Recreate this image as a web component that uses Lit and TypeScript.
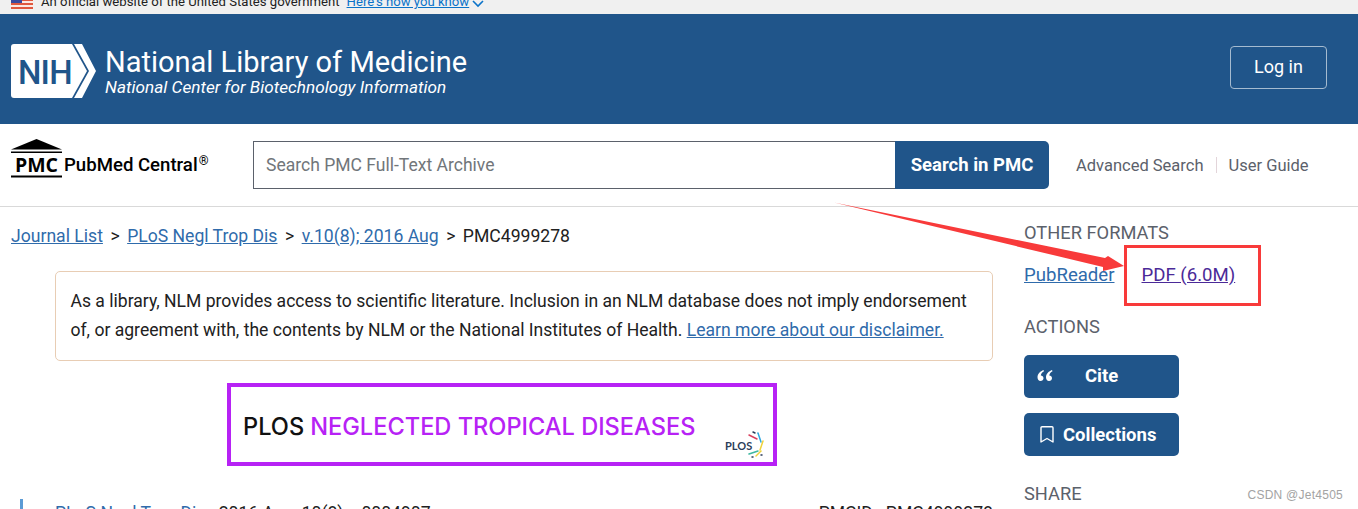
import { LitElement, html, css, svg } from "lit";
import { customElement } from "lit/decorators.js";

const flag = svg`<svg class="flag" viewBox="0 0 22 14" width="22" height="14">
  <rect width="22" height="14" fill="#fbe9e4"/>
  <rect y="0" width="22" height="2" fill="#e0583f"/><rect y="4" width="22" height="2" fill="#e0583f"/>
  <rect y="8" width="22" height="2" fill="#e0583f"/><rect y="12" width="22" height="2" fill="#e0583f"/>
  <rect width="11" height="8" fill="#3a4a9f"/>
</svg>`;

const nih = svg`<svg class="nih" viewBox="0 0 86 54" width="86" height="54">
  <path d="M3 0H61L76 27 61 54H3A3 3 0 0 1 0 51V3A3 3 0 0 1 3 0Z" fill="#fff"/>
  <path d="M63 0H71L85 27 71 54H63L78 27Z" fill="#fff"/>
  <text x="7" y="39.500" class="nih-t">NIH</text>
</svg>`;

const pmc = svg`<svg class="pmc" viewBox="0 0 52 40" width="52" height="40">
  <path d="M25.500 0 51 10.500H0Z" fill="#000"/>
  <rect x="0" y="12.500" width="51" height="1.500" fill="#000"/>
  <rect x="0" y="36.500" width="51" height="2" fill="#000"/>
  <text x="25.500" y="33" text-anchor="middle" class="pmc-t">PMC</text>
</svg>`;

const bookmark = svg`<svg viewBox="0 0 14 17" width="14" height="17" fill="none" stroke="#fff" stroke-width="1.400">
  <path d="M1 1.700A1 1 0 0 1 2 .7H12A1 1 0 0 1 13 1.700V16L7 12.500 1 16Z" stroke-linejoin="round"/>
</svg>`;

const quote = svg`<svg viewBox="0 0 16 11" width="16" height="11" fill="#fff">
  <path d="M6.500 0C3.500 1.300 .5 3.500 .5 7.200 .5 9.500 1.800 11 3.500 11 5.200 11 6.500 9.800 6.500 8.200 6.500 6.500 5.200 5.500 3.800 5.500 4 3.800 5.200 2.300 7 1.300Z"/>
  <path d="M15 0C12 1.300 9 3.500 9 7.200 9 9.500 10.300 11 12 11 13.700 11 15 9.800 15 8.200 15 6.500 13.700 5.500 12.300 5.500 12.500 3.800 13.700 2.300 15.500 1.300Z"/>
</svg>`;

const plosMark = svg`<svg class="plos-mark" viewBox="0 0 42 30" width="42" height="30">
  <g fill="none" stroke-width="1.500" stroke-linecap="round">
    <path d="M24 6 32 10" stroke="#d9415f"/><path d="M33 4 36 13" stroke="#2fa8e0"/>
    <path d="M38 12 35 21" stroke="#f0d33a"/><path d="M24 25 33 22" stroke="#3fb8a0"/>
    <path d="M31 27 36 22" stroke="#f0d33a"/><path d="M28 3 30 4" stroke="#2c3e5a"/>
    <path d="M27 28 28 28" stroke="#2c3e5a"/><path d="M36 26 37 26" stroke="#2c3e5a"/>
  </g>
  <text x="0" y="21" class="plos-t">PLOS</text>
</svg>`;

@customElement("app-root")
export class AppRoot extends LitElement {
  static styles = css`
    :host {
      display: block;
      position: relative;
      width: 1358px;
      height: 509px;
      overflow: hidden;
      background: #fff;
      font-family: Roboto, "Liberation Sans", sans-serif;
      color: #212121;
    }
    a { text-decoration: underline; color: #2f6bab; }

    .gov {
      height: 14px;
      background: #f0f0f0;
      overflow: hidden;
      display: flex;
      align-items: flex-end;
      padding: 0 0 5px 11px;
      box-sizing: border-box;
      gap: 8px;
      font-size: 13.150px;
      line-height: 15px;
      white-space: nowrap;
    }
    .gov .flag { flex: none; }
    .gov a { color: #0b73c9; margin-left: -1px; }
    .gov .chev { margin-left: -5px; margin-bottom: 1px; }

    .masthead {
      height: 110px;
      background: #20558a;
      display: flex;
      align-items: center;
      justify-content: space-between;
      padding: 0 31px 0 11px;
      box-sizing: border-box;
      color: #fff;
    }
    .brand { display: flex; align-items: center; gap: 8px; margin-top: 4px; }
    .nih-t { font: 500 33px Roboto, sans-serif; fill: #20558a; letter-spacing: -0.800px; }
    .brand-text { display: flex; flex-direction: column; }
    .brand-title { font-size: 29px; line-height: 32px; font-weight: 400; margin: 1px 0 -1px; }
    .brand-sub { font-size: 17.200px; line-height: 20px; font-style: italic; }
    .login {
      width: 97px;
      height: 43px;
      box-sizing: border-box;
      border: 1px solid #a5bbd0;
      border-radius: 4px;
      display: flex;
      align-items: center;
      justify-content: center;
      font-size: 18px;
      margin-bottom: 4px;
      padding-bottom: 2px;
    }

    .searchbar {
      height: 83px;
      box-sizing: border-box;
      border-bottom: 1px solid #d9d9d9;
      display: flex;
      align-items: center;
      padding: 0 0 0 11px;
    }
    .pmc-logo { display: flex; align-items: flex-end; width: 242px; flex: none; color: #000; margin-bottom: 12px; }
    .pmc-t { font: 700 19.500px "Open Sans", sans-serif; fill: #000; }
    .pmc-name { font-size: 18.600px; font-weight: 500; margin-left: 1px; line-height: 22px; margin-bottom: 3px; white-space: nowrap; }
    .pmc-name sup { font-size: 12.500px; font-weight: 400; line-height: 0; vertical-align: 6px; margin-left: 1px; }
    .search-box {
      display: flex;
      width: 796px;
      height: 48px;
      flex: none;
    }
    .search-input {
      flex: 1;
      box-sizing: border-box;
      border: 1px solid #5b616b;
      border-right: none;
      display: flex;
      align-items: center;
      padding-left: 12px;
      font-size: 17.550px;
      color: #71767a;
    }
    .search-btn {
      width: 154px;
      background: #20558a;
      color: #fff;
      font-weight: 700;
      font-size: 18.500px;
      border-radius: 0 5px 5px 0;
      display: flex;
      align-items: center;
      justify-content: center;
    }
    .search-links {
      display: flex;
      align-items: center;
      margin-left: 27px;
      font-size: 16.500px;
      color: #5b616b;
      white-space: nowrap;
    }
    .search-links .sep { width: 1px; height: 16px; background: #e3d5da; margin: 0 12px; }

    .main { display: grid; grid-template-columns: 1024px 1fr; }
    .left { padding-left: 11px; }
    .crumbs {
      margin-top: 18px;
      font-size: 17.600px;
      line-height: 22px;
      display: flex;
      gap: 7.500px;
      white-space: nowrap;
    }
    .disclaimer {
      box-sizing: border-box;
      width: 938px;
      height: 90px;
      margin: 24px 0 0 44px;
      border: 1px solid #e8cdb4;
      border-radius: 5px;
      padding: 15px 14.500px;
      font-size: 17.560px;
      line-height: 29px;
    }
    .banner-wrap { display: flex; justify-content: center; width: 982px; margin-top: 22px; }
    .banner {
      box-sizing: border-box;
      position: relative;
      width: 550px;
      height: 83px;
      border: 4px solid #b722f5;
      display: flex;
      align-items: center;
      padding: 4px 0 0 12px;
      font-family: Inter, sans-serif;
      font-size: 23.600px;
      font-weight: 500;
      color: #b722f5;
      white-space: nowrap;
      background: #fff;
    }
    .banner b { color: #111; font-weight: 500; margin-right: 6px; }
    .plos-mark { position: absolute; right: 6px; bottom: 3px; }
    .plos-t { font: 700 11px Lato, sans-serif; fill: #2c3e5a; }
    .cite-row {
      margin: 33px 0 0 9px;
      width: 973px;
      box-sizing: border-box;
      padding: 2px 0 0 32px;
      border-left: 3px solid #5b9bd5;
      display: flex;
      justify-content: space-between;
      font-size: 17.600px;
      line-height: 24px;
      white-space: nowrap;
    }
    .cite-row a { text-decoration: none; }

    .side { padding-top: 15px; }
    .side h2 {
      margin: 0;
      font-size: 18.300px;
      line-height: 22px;
      font-weight: 400;
      color: #5b616b;
      text-transform: uppercase;
    }
    .formats {
      display: flex;
      gap: 27px;
      margin-top: 19px;
      font-size: 18.600px;
      line-height: 24px;
      white-space: nowrap;
    }
    .formats .visited { color: #4b2a98; }
    .side .actions-h { margin-top: 29px; }
    .btn {
      box-sizing: border-box;
      width: 155px;
      height: 43px;
      background: #20558a;
      color: #fff;
      border-radius: 5px;
      font-weight: 700;
      font-size: 18.500px;
      display: flex;
      align-items: center;
    }
    .btn.cite { margin-top: 17px; padding: 0 0 2px 13px; }
    .btn.cite span { margin-left: 32px; }
    .btn.coll { margin-top: 15px; padding-left: 16px; gap: 9px; }
    .side .share-h { margin-top: 27px; }

    .overlay { position: absolute; left: 0; top: 0; pointer-events: none; }
    .redbox {
      position: absolute;
      left: 1124px;
      top: 245px;
      width: 137px;
      height: 61px;
      box-sizing: border-box;
      border: 3px solid #f83a3a;
    }
    .watermark {
      position: absolute;
      right: 15px;
      top: 487px;
      font: 12px/16px "Liberation Sans", sans-serif;
      letter-spacing: 0.250px;
      color: #a3a3a3;
    }
  `;

  render() {
    return html`
      <div class="gov">
        ${flag}
        <span>An official website of the United States government</span>
        <a>Here's how you know</a>
        <svg class="chev" viewBox="0 0 12 8" width="12" height="8" fill="none" stroke="#0b73c9" stroke-width="1.600"><path d="M1 1 6 6 11 1"/></svg>
      </div>
      <header class="masthead">
        <div class="brand">
          ${nih}
          <div class="brand-text">
            <div class="brand-title">National Library of Medicine</div>
            <div class="brand-sub">National Center for Biotechnology Information</div>
          </div>
        </div>
        <div class="login">Log in</div>
      </header>
      <div class="searchbar">
        <div class="pmc-logo">
          ${pmc}
          <div class="pmc-name">PubMed Central<sup>®</sup></div>
        </div>
        <div class="search-box">
          <div class="search-input">Search PMC Full-Text Archive</div>
          <div class="search-btn">Search in PMC</div>
        </div>
        <div class="search-links">
          <span>Advanced Search</span><span class="sep"></span><span>User Guide</span>
        </div>
      </div>
      <div class="main">
        <div class="left">
          <div class="crumbs">
            <a>Journal List</a><span>&gt;</span>
            <a>PLoS Negl Trop Dis</a><span>&gt;</span>
            <a>v.10(8); 2016 Aug</a><span>&gt;</span>
            <span>PMC4999278</span>
          </div>
          <div class="disclaimer">
            As a library, NLM provides access to scientific literature. Inclusion in an NLM database does not imply endorsement of, or agreement with, the contents by NLM or the National Institutes of Health.
            <a>Learn more about our disclaimer.</a>
          </div>
          <div class="banner-wrap">
            <div class="banner"><b>PLOS</b> NEGLECTED TROPICAL DISEASES ${plosMark}</div>
          </div>
          <div class="cite-row">
            <span><a>PLoS Negl Trop Dis</a>.&nbsp; 2016 Aug; 10(8): e0004907.</span>
            <span>PMCID:&nbsp; PMC4999278</span>
          </div>
        </div>
        <aside class="side">
          <h2>Other Formats</h2>
          <div class="formats">
            <a>PubReader</a>
            <a class="visited">PDF (6.0M)</a>
          </div>
          <h2 class="actions-h">Actions</h2>
          <div class="btn cite">${quote}<span>Cite</span></div>
          <div class="btn coll">${bookmark}Collections</div>
          <h2 class="share-h">Share</h2>
        </aside>
      </div>
      <svg class="overlay" width="1358" height="509" viewBox="0 0 1358 509">
        <path d="M834 202.500 1105 258 1108 256 1124 266 1103 271 1103 267Z" fill="#f83a3a"/>
      </svg>
      <div class="redbox"></div>
      <div class="watermark">CSDN @Jet4505</div>
    `;
  }
}
